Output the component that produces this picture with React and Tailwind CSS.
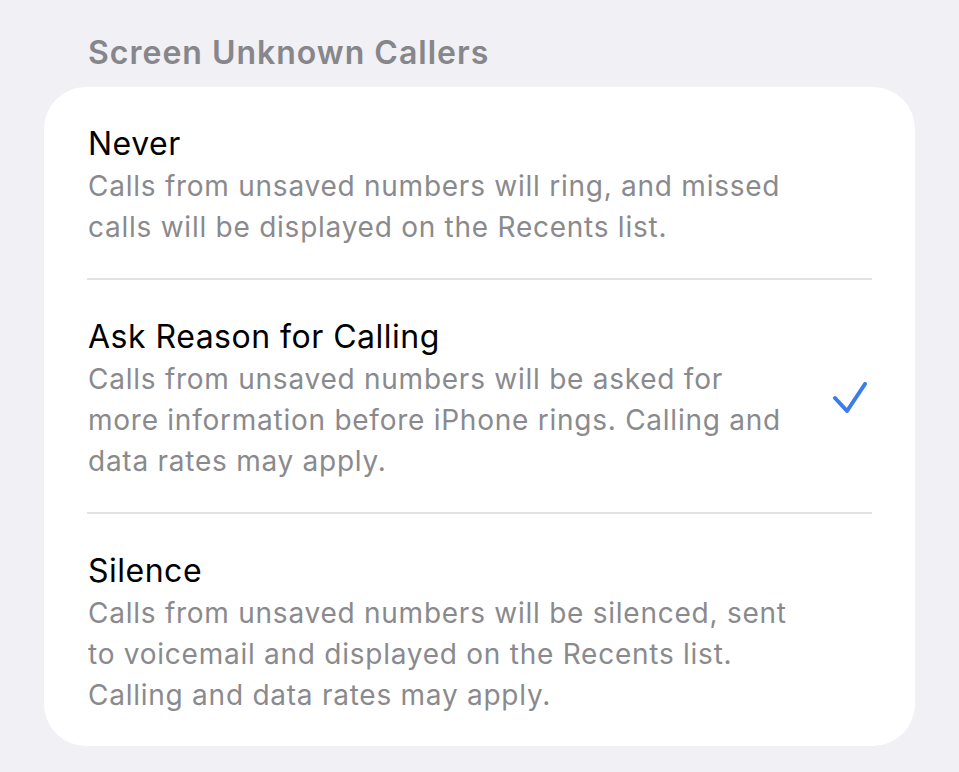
import React from "react";

const rows = [
  {
    title: "Never",
    lines: [
      "Calls from unsaved numbers will ring, and missed",
      "calls will be displayed on the Recents list.",
    ],
    checked: false,
  },
  {
    title: "Ask Reason for Calling",
    lines: [
      "Calls from unsaved numbers will be asked for",
      "more information before iPhone rings. Calling and",
      "data rates may apply.",
    ],
    checked: true,
  },
  {
    title: "Silence",
    lines: [
      "Calls from unsaved numbers will be silenced, sent",
      "to voicemail and displayed on the Recents list.",
      "Calling and data rates may apply.",
    ],
    checked: false,
  },
];

function Check() {
  return (
    <svg width="36" height="34" viewBox="0 0 36 34" fill="none">
      <path
        d="M3 16 L15 29 L33 2"
        stroke="#3a7cec"
        strokeWidth="4"
        strokeLinecap="round"
        strokeLinejoin="round"
      />
    </svg>
  );
}

export default function App() {
  return (
    <div
      className="w-[959px] h-[772px] bg-[#f0f0f5] px-[44px] pt-[32px] overflow-hidden"
      style={{ fontFamily: "Inter, 'Noto Sans', sans-serif" }}
    >
      <div className="pl-[44px] text-[32px] leading-[41px] font-semibold text-[#86868b] tracking-[1px]">
        Screen Unknown Callers
      </div>
      <div className="mt-[14px] bg-white rounded-[42px] pl-[43px] pr-[43px]">
        {rows.map((r, i) => (
          <div
            key={r.title}
            className={`flex items-center pt-[36px] pb-[30px] ${
              i < rows.length - 1 ? "border-b-2 border-[#e2e2e5]" : ""
            }`}
          >
            <div className="flex-1 pl-[1px]">
              <div className="text-[32px] leading-[41px] text-black tracking-[0.5px]">
                {r.title}
              </div>
              <div className="mt-[2px] text-[28px] leading-[41px] text-[#8a8a8e] tracking-[0.75px]">
                {r.lines.map((l) => (
                  <div key={l} className="whitespace-nowrap">
                    {l}
                  </div>
                ))}
              </div>
            </div>
            {r.checked && (
              <div className="mr-[4px]">
                <Check />
              </div>
            )}
          </div>
        ))}
      </div>
    </div>
  );
}
